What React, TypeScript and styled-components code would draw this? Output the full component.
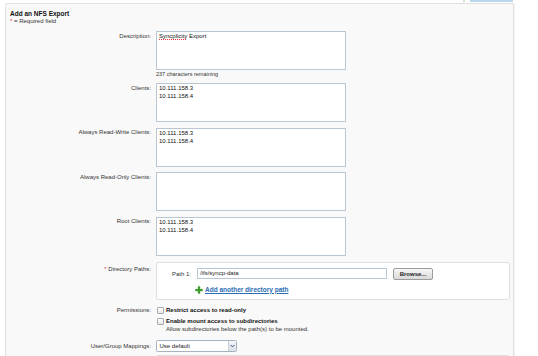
import React from "react";
import styled, { createGlobalStyle } from "styled-components";

const GlobalStyle = createGlobalStyle`
  html, body { margin: 0; padding: 0; background: #fff; }
  body { font-family: "Liberation Sans", Arial, Helvetica, sans-serif; color: #222; }
  * { box-sizing: border-box; }
`;

const Page = styled.div`
  width: 538px;
  height: 356px;
  overflow: hidden;
  padding-left: 5px;
`;

const TopStrip = styled.div`
  width: 509px;
  height: 3px;
  display: flex;
  justify-content: flex-end;
  align-items: flex-start;
  gap: 5px;
  padding-right: 1px;
`;

const StripDot = styled.span`
  width: 2px;
  height: 1.5px;
  background: #cfe8c6;
`;

const StripButton = styled.span`
  width: 43px;
  height: 2px;
  background: #bcd6ec;
`;

const Panel = styled.section`
  width: 509px;
  min-height: 420px;
  background: #f9f9f9;
  border: 1px solid #e1e1e1;
  border-radius: 2px;
  box-shadow: 1px 0 1px rgba(0, 0, 0, 0.06);
  padding-top: 5px;
`;

const Title = styled.h2`
  margin: 0 0 0 4px;
  font-size: 6.5px;
  line-height: 9px;
  font-weight: bold;
  color: #111;
`;

const Required = styled.div`
  margin-left: 4px;
  font-size: 6px;
  line-height: 7px;
  color: #333;
`;

const Star = styled.span`
  color: #d8392b;
`;

const Form = styled.div`
  display: flex;
  flex-direction: column;
`;

const Row = styled.div<{ $mt: number }>`
  display: grid;
  grid-template-columns: 145px 1fr;
  column-gap: 5px;
  margin-top: ${(p) => p.$mt}px;
`;

const Label = styled.div<{ $pt?: number }>`
  text-align: right;
  font-size: 6px;
  line-height: 8px;
  color: #333;
  padding-top: ${(p) => p.$pt ?? 0}px;
`;

const Field = styled.div`
  display: flex;
  flex-direction: column;
  align-items: flex-start;
`;

const TextBox = styled.div`
  width: 190px;
  height: 39px;
  background: #fff;
  border: 1px solid #b9c6d4;
  padding: 0 2px;
  font-size: 6px;
  line-height: 8px;
  color: #111;
  white-space: pre-line;
`;

const Misspelled = styled.span`
  padding-bottom: 1px;
  background-image: linear-gradient(to right, #e8343a 60%, transparent 60%);
  background-size: 2px 1px;
  background-repeat: repeat-x;
  background-position: 0 100%;
`;

const Caption = styled.div`
  margin-top: 0.5px;
  font-size: 5.5px;
  line-height: 7px;
  color: #333;
`;

const PathsBox = styled.div`
  width: 354px;
  background: #fff;
  border: 1px solid #e0e0e0;
  border-radius: 2px;
  padding: 4.5px 0 5.5px 15px;
  display: flex;
  flex-direction: column;
  gap: 6px;
`;

const PathLine = styled.div`
  display: flex;
  align-items: center;
  gap: 6px;
  height: 12px;
`;

const PathLabel = styled.span`
  width: 19px;
  text-align: right;
  font-size: 6px;
  color: #333;
  white-space: nowrap;
`;

const TextInput = styled.div`
  width: 190px;
  height: 11px;
  border: 1px solid #b9c6d4;
  background: #fff;
  padding-left: 2px;
  font-size: 6px;
  line-height: 9px;
  color: #222;
`;

const Button = styled.div`
  width: 40px;
  height: 12px;
  border: 1px solid #9c9c9c;
  border-radius: 2px;
  background: linear-gradient(#f7f7f7, #d9d9d9);
  font-size: 6px;
  font-weight: bold;
  line-height: 10px;
  text-align: center;
  color: #222;
`;

const LinkLine = styled.div`
  display: flex;
  align-items: center;
  gap: 2.5px;
  height: 8px;
  padding-left: 22.5px;
`;

const LinkText = styled.a`
  font-size: 6.5px;
  font-weight: bold;
  color: #2a6db3;
  text-decoration: underline;
  line-height: 8px;
`;

const Options = styled.div`
  display: flex;
  flex-direction: column;
  gap: 3px;
`;

const Option = styled.div`
  display: flex;
  align-items: flex-start;
  gap: 2.5px;
`;

const Checkbox = styled.span`
  width: 7px;
  height: 7px;
  margin: 0.5px 0 0 0.5px;
  border: 1px solid #a9a9a9;
  border-radius: 1px;
  background: linear-gradient(#ffffff, #e8e8e8);
  flex: none;
`;

const OptionText = styled.div`
  display: flex;
  flex-direction: column;
`;

const OptionTitle = styled.span`
  font-size: 6px;
  font-weight: bold;
  line-height: 8px;
  color: #111;
`;

const OptionHint = styled.span`
  font-size: 6px;
  line-height: 8px;
  color: #333;
`;

const Select = styled.div`
  width: 81px;
  height: 12px;
  display: flex;
  border: 1px solid #a7b2bf;
  border-radius: 1.5px;
  background: #fff;
  overflow: hidden;
`;

const SelectValue = styled.span`
  flex: 1;
  padding-left: 2.5px;
  font-size: 6px;
  line-height: 10px;
  color: #222;
`;

const SelectArrow = styled.span`
  width: 8.5px;
  display: flex;
  align-items: center;
  justify-content: center;
  border-left: 1px solid #c5ccd5;
  background: linear-gradient(#f4f6f9, #dbe1e8);
`;

const NextBox = styled.div`
  width: 354px;
  height: 30px;
  background: #fff;
  border: 1px solid #e0e0e0;
  border-radius: 2px;
`;

const Plus = () => (
  <svg width="8" height="8" viewBox="0 0 8 8">
    <rect x="2.9" y="0.3" width="2.3" height="7.4" fill="#3f9c2c" />
    <rect x="0.3" y="2.9" width="7.4" height="2.3" fill="#3f9c2c" />
  </svg>
);

const Chevron = () => (
  <svg width="5" height="4" viewBox="0 0 5 4">
    <path d="M0.6 0.9 L2.5 2.9 L4.4 0.9" fill="none" stroke="#34527e" strokeWidth="1" />
  </svg>
);

const textRows: { label: string; lines: string[]; mt: number }[] = [
  { label: "Clients:", lines: ["10.111.158.3", "10.111.158.4"], mt: 5.5 },
  { label: "Always Read-Write Clients:", lines: ["10.111.158.3", "10.111.158.4"], mt: 5.5 },
  { label: "Always Read-Only Clients:", lines: [], mt: 5.5 },
  { label: "Root Clients:", lines: ["10.111.158.3", "10.111.158.4"], mt: 5.5 },
];

export default function App() {
  return (
    <Page>
      <GlobalStyle />
      <TopStrip>
        <StripDot />
        <StripButton />
      </TopStrip>
      <Panel>
        <Title>Add an NFS Export</Title>
        <Required>
          <Star>*</Star> = Required field
        </Required>
        <Form>
          <Row $mt={6}>
            <Label $pt={0.5}>Description:</Label>
            <Field>
              <TextBox>
                <Misspelled>Syncplicity</Misspelled> Export
              </TextBox>
              <Caption>237 characters remaining</Caption>
            </Field>
          </Row>
          {textRows.map((r) => (
            <Row key={r.label} $mt={r.mt}>
              <Label $pt={0.5}>{r.label}</Label>
              <Field>
                <TextBox>{r.lines.join("\n")}</TextBox>
              </Field>
            </Row>
          ))}
          <Row $mt={6.5}>
            <Label $pt={2.5}>
              <Star>*</Star> Directory Paths:
            </Label>
            <Field>
              <PathsBox>
                <PathLine>
                  <PathLabel>Path 1:</PathLabel>
                  <TextInput>/ifs/syncp-data</TextInput>
                  <Button>Browse...</Button>
                </PathLine>
                <LinkLine>
                  <Plus />
                  <LinkText>Add another directory path</LinkText>
                </LinkLine>
              </PathsBox>
            </Field>
          </Row>
          <Row $mt={6}>
            <Label>Permissions:</Label>
            <Options>
              <Option>
                <Checkbox />
                <OptionText>
                  <OptionTitle>Restrict access to read-only</OptionTitle>
                </OptionText>
              </Option>
              <Option>
                <Checkbox />
                <OptionText>
                  <OptionTitle>Enable mount access to subdirectories</OptionTitle>
                  <OptionHint>Allow subdirectories below the path(s) to be mounted.</OptionHint>
                </OptionText>
              </Option>
            </Options>
          </Row>
          <Row $mt={6.5}>
            <Label $pt={2.5}>User/Group Mappings:</Label>
            <Field>
              <Select>
                <SelectValue>Use default</SelectValue>
                <SelectArrow>
                  <Chevron />
                </SelectArrow>
              </Select>
            </Field>
          </Row>
          <Row $mt={3}>
            <Label />
            <Field>
              <NextBox />
            </Field>
          </Row>
        </Form>
      </Panel>
    </Page>
  );
}
